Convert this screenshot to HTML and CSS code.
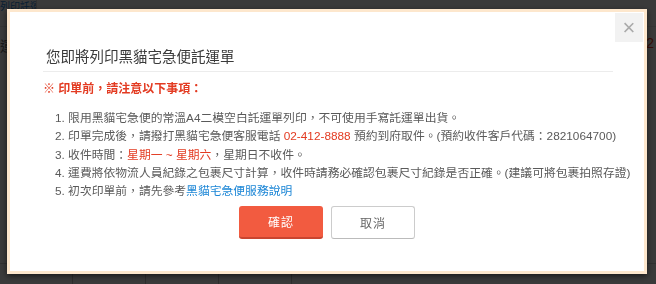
FILE: index.html
```html
<!DOCTYPE html>
<html lang="zh-Hant">
<head>
    <meta charset="UTF-8">
    <meta name="viewport" content="width=device-width, initial-scale=1.0">
    <title>列印黑貓宅急便託運單</title>
    <link rel="stylesheet" href="styles.css">
</head>
<body>
    <div class="pagina">
        <div class="pestanas">
            <a class="pestana" href="#">列印託運單</a>
        </div>
        <div class="fila">
            <span class="dato">運</span>
            <span class="dato rojo">2</span>
        </div>
        <div class="tabla">
            <span></span><span></span><span></span><span></span>
        </div>
    </div>

    <div class="fondo">
        <div class="modal">
            <button class="cerrar">&times;</button>
            <div class="cuerpo">
                <h3 class="titulo">您即將列印黑貓宅急便託運單</h3>
                <p class="aviso">※ 印單前，請注意以下事項：</p>
                <div class="lista">
                    <div>1. 限用黑貓宅急便的常溫A4二模空白託運單列印，不可使用手寫託運單出貨。</div>
                    <div>2. 印單完成後，請撥打黑貓宅急便客服電話 <span class="rojo">02-412-8888</span> 預約到府取件。(預約收件客戶代碼：2821064700)</div>
                    <div>3. 收件時間：<span class="rojo">星期一 ~ 星期六</span>，星期日不收件。</div>
                    <div>4. 運費將依物流人員紀錄之包裹尺寸計算，收件時請務必確認包裹尺寸紀錄是否正確。(建議可將包裹拍照存證)</div>
                    <div>5. 初次印單前，請先參考<a class="enlace" href="#">黑貓宅急便服務說明</a></div>
                </div>
                <div class="botones">
                    <button class="boton confirmar">確認</button>
                    <button class="boton cancelar">取消</button>
                </div>
            </div>
        </div>
    </div>
</body>
</html>
```

FILE: styles.css
```css
/* pagina de fondo, queda tapada por la capa oscura */
body {
    margin: 0;
    background: #f2f2f2;
    font-family: "Liberation Sans", "Noto Sans CJK TC", sans-serif;
    overflow: hidden;
    height: 284px;
}
.pagina {
    height: 284px;
}
.pestanas {
    height: 26px;
    border-bottom: 1px solid #ddd;
    display: flex;
}
.pestana {
    display: block;
    width: 36px;
    padding-top: 1px;
    font-size: 10px;
    line-height: 12px;
    color: #1f7fd0;
    text-decoration: none;
    border-right: 1px solid #ccc;
    text-align: right;
    overflow: hidden;
    white-space: nowrap;
}
.fila {
    display: flex;
    justify-content: space-between;
    padding: 8px 2px 0 0;
    height: 40px;
    font-size: 14px;
    color: #666;
}
.tabla {
    margin-top: 188px;
    display: flex;
    border-top: 1px solid #ccc;
    height: 20px;
}
.tabla span {
    border-right: 1px solid #bbb;
    width: 72px;
}

/* capa oscura + ventana */
.fondo {
    position: fixed;
    inset: 0;
    background: rgba(0, 0, 0, 0.76);
    padding: 9px 0 0 7px;
}
.modal {
    position: relative;
    width: 640px;
    height: 265px;
    box-sizing: border-box;
    background: #fff;
    border: 3px solid #fde7cd;
    box-shadow: 0 2px 6px rgba(0, 0, 0, 0.6);
}
.cerrar {
    position: absolute;
    top: 1px;
    right: 1px;
    width: 28px;
    height: 29px;
    border: none;
    padding: 0;
    background: #f2f2f2;
    color: #aaa;
    font-size: 22px;
    line-height: 28px;
    font-family: "Liberation Sans", sans-serif;
}
.cuerpo {
    padding: 35px 8px 0 33px;
}
.titulo {
    margin: 0 23px 0 0;
    padding: 0 0 4px 3px;
    font-size: 14.5px;
    line-height: 20px;
    font-weight: normal;
    color: #3a3a3a;
    border-bottom: 1px solid #ececec;
}
.aviso {
    margin: 8px 0 0 0;
    font-size: 12px;
    line-height: 18px;
    font-weight: bold;
    color: #e33b22;
}
.lista {
    margin-top: 11px;
    padding-left: 12px;
    font-size: 11.8px;
    line-height: 18.3px;
    color: #5a5a5a;
}
.rojo {
    color: #e33b22;
}
.enlace {
    color: #1c86d6;
    text-decoration: none;
}
.botones {
    display: flex;
    justify-content: center;
    gap: 8px;
    margin: 6px 25px 0 0;
}
.boton {
    width: 84px;
    height: 33px;
    border-radius: 3px;
    font-size: 12px;
    font-family: "Liberation Sans", "Noto Sans CJK TC", sans-serif;
    letter-spacing: 1px;
}
.confirmar {
    background: #f25b40;
    color: #fff;
    border: none;
    border-bottom: 2px solid #c94530;
}
.cancelar {
    background: #fff;
    color: #666;
    border: 1px solid #ccc;
    border-bottom-color: #bbb;
}
```
